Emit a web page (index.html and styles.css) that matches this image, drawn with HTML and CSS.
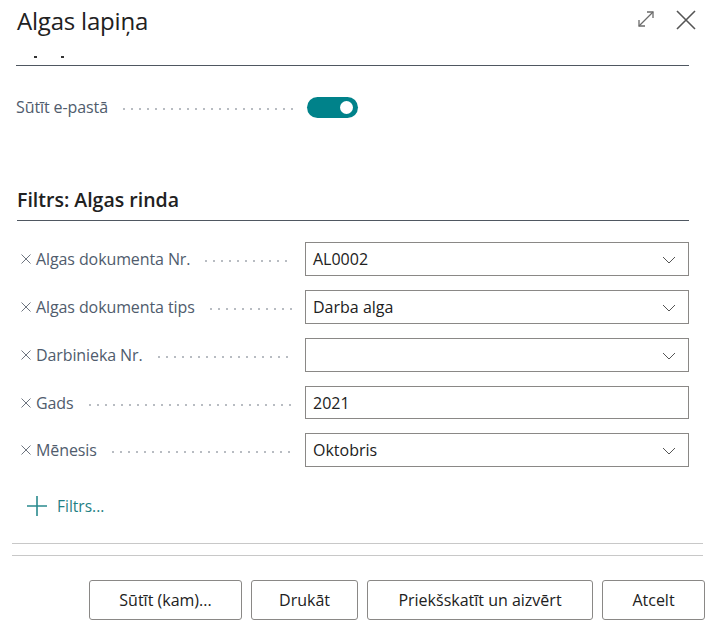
FILE: index.html
```html
<!DOCTYPE html>
<html lang="lv">
<head>
<meta charset="utf-8">
<link rel="stylesheet" href="styles.css">
</head>
<body>
<div class="dialog">
  <header class="head">
    <h1 class="title">Algas lapiņa</h1>
    <div class="head-icons">
      <svg class="ico-expand" width="20" height="20" viewBox="0 0 20 20" fill="none" stroke="#6b6b6b" stroke-width="1.3">
        <path d="M3 17 L17 3"/><path d="M3 11 V17 H9" stroke-linejoin="miter"/><path d="M11 3 H17 V9"/>
      </svg>
      <svg class="ico-close" width="22" height="22" viewBox="0 0 22 22" fill="none" stroke="#555" stroke-width="1.6">
        <path d="M2 2 L20 20 M20 2 L2 20"/>
      </svg>
    </div>
  </header>
  <div class="scroll">
    <div class="cut-section">
      <div class="cut-dots"><span></span><span></span></div>
    </div>
    <div class="field-row opt-row">
      <span class="label">Sūtīt e-pastā</span>
      <span class="leader short"></span>
      <span class="toggle"><span class="knob"></span></span>
    </div>

    <h2 class="section-title">Filtrs: Algas rinda</h2>
    <div class="filters">
      <div class="frow">
        <svg class="x" width="10" height="10" viewBox="0 0 10 10"><path d="M0.5 0.5 L9.5 9.5 M9.5 0.5 L0.5 9.5" stroke="#6e7580" stroke-width="1"/></svg><span class="label">Algas dokumenta Nr.</span><span class="leader"></span>
        <div class="input"><span>AL0002</span><svg class="chev" width="14" height="8" viewBox="0 0 14 8"><path d="M1 1 L7 7 L13 1" fill="none" stroke="#555" stroke-width="1"/></svg></div>
      </div>
      <div class="frow">
        <svg class="x" width="10" height="10" viewBox="0 0 10 10"><path d="M0.5 0.5 L9.5 9.5 M9.5 0.5 L0.5 9.5" stroke="#6e7580" stroke-width="1"/></svg><span class="label">Algas dokumenta tips</span><span class="leader"></span>
        <div class="input"><span>Darba alga</span><svg class="chev" width="14" height="8" viewBox="0 0 14 8"><path d="M1 1 L7 7 L13 1" fill="none" stroke="#555" stroke-width="1"/></svg></div>
      </div>
      <div class="frow">
        <svg class="x" width="10" height="10" viewBox="0 0 10 10"><path d="M0.5 0.5 L9.5 9.5 M9.5 0.5 L0.5 9.5" stroke="#6e7580" stroke-width="1"/></svg><span class="label">Darbinieka Nr.</span><span class="leader"></span>
        <div class="input"><span></span><svg class="chev" width="14" height="8" viewBox="0 0 14 8"><path d="M1 1 L7 7 L13 1" fill="none" stroke="#555" stroke-width="1"/></svg></div>
      </div>
      <div class="frow">
        <svg class="x" width="10" height="10" viewBox="0 0 10 10"><path d="M0.5 0.5 L9.5 9.5 M9.5 0.5 L0.5 9.5" stroke="#6e7580" stroke-width="1"/></svg><span class="label">Gads</span><span class="leader"></span>
        <div class="input"><span>2021</span></div>
      </div>
      <div class="frow">
        <svg class="x" width="10" height="10" viewBox="0 0 10 10"><path d="M0.5 0.5 L9.5 9.5 M9.5 0.5 L0.5 9.5" stroke="#6e7580" stroke-width="1"/></svg><span class="label">Mēnesis</span><span class="leader"></span>
        <div class="input"><span>Oktobris</span><svg class="chev" width="14" height="8" viewBox="0 0 14 8"><path d="M1 1 L7 7 L13 1" fill="none" stroke="#555" stroke-width="1"/></svg></div>
      </div>
    </div>
    <div class="add-filter">
      <svg width="20" height="20" viewBox="0 0 20 20" fill="none" stroke="#2a8a8e" stroke-width="1.6"><path d="M10 0 V20 M0 10 H20"/></svg>
      <span>Filtrs...</span>
    </div>
    <div class="end-line"></div>
  </div>
  <footer class="foot">
    <button class="btn btn1">Sūtīt (kam)...</button>
    <button class="btn btn2">Drukāt</button>
    <button class="btn btn3">Priekšskatīt un aizvērt</button>
    <button class="btn btn4">Atcelt</button>
  </footer>
</div>
</body>
</html>
```

FILE: styles.css
```css
* { box-sizing: border-box; }
html, body { margin: 0; padding: 0; background: #fff; }
body {
  font-family: "Open Sans", "Noto Sans", sans-serif;
  color: #212121;
  width: 715px;
  height: 628px;
  overflow: hidden;
}
.dialog { width: 715px; }
.head {
  display: flex;
  align-items: center;
  justify-content: space-between;
  height: 40px;
  padding: 0 18px 0 17px;
}
.title {
  margin: 0;
  font-size: 24px;
  font-weight: 400;
  color: #212121;
  letter-spacing: -0.2px;
}
.head-icons { display: flex; align-items: center; gap: 19px; }
.ico-expand { margin-top: -2px; }
.scroll { padding: 0 26px 0 16px; }
.cut-section {
  height: 26px;
  border-bottom: 1.5px solid #4f5761;
  position: relative;
}
.cut-dots { position: absolute; left: 18px; top: 16px; display: flex; gap: 24px; }
.cut-dots span { width: 3px; height: 1.5px; background: #333; display: block; }
.field-row { display: flex; align-items: center; }
.opt-row { margin-top: 30px; height: 22px; }
.label {
  font-size: 16px;
  color: #505c6d;
  white-space: nowrap;
  letter-spacing: -0.1px;
}
.leader {
  flex: 1;
  height: 2px;
  margin: 4px 12px 0 12px;
  background-image: radial-gradient(circle, #b8bcc2 0.8px, transparent 1px);
  background-size: 8px 2px;
  background-repeat: repeat-x;
}
.leader.short { flex: 0 0 176px; margin-right: 11px; }
.toggle {
  width: 51px;
  height: 21px;
  border-radius: 11px;
  background: #00828a;
  position: relative;
  display: inline-block;
}
.knob {
  position: absolute;
  right: 5px;
  top: 4px;
  width: 13px;
  height: 13px;
  border-radius: 50%;
  background: #fff;
}
.section-title {
  margin: 69px 0 0 1px;
  font-size: 19.5px;
  font-weight: 600;
  color: #212121;
  padding-bottom: 7px;
  border-bottom: 1.5px solid #4f5761;
  line-height: 26px;
}
.filters { margin-top: 21px; display: flex; flex-direction: column; gap: 14px; }
.frow { display: flex; align-items: center; height: 34px; }
.frow:nth-child(4) { height: 33px; }
.x {
  flex: 0 0 10px;
  margin: 0 5px 0 5px;
}
.input {
  flex: 0 0 384px;
  height: 100%;
  border: 1px solid #8a8886;
  display: flex;
  align-items: center;
  justify-content: space-between;
  padding: 0 12px 0 7px;
  font-size: 16px;
  color: #212121;
}
.chev { margin-top: 1px; }
.add-filter {
  display: flex;
  align-items: center;
  gap: 10px;
  margin: 28px 0 0 11px;
  color: #1f7f84;
  font-size: 15.5px;
}
.end-line {
  margin-top: 26px;
  height: 13px;
  border-top: 1px solid #c8c8c8;
  border-bottom: 1px solid #c8c8c8;
  margin-right: -14px;
  margin-left: -4px;
}
.foot {
  display: flex;
  justify-content: flex-end;
  gap: 9px;
  padding: 24px 10px 0 0;
}
.btn {
  font-family: inherit;
  height: 40px;
  background: #fff;
  border: 1px solid #8a8886;
  border-radius: 3px;
  font-size: 16px;
  color: #212121;
  padding: 0;
}
.btn1 { width: 153px; }
.btn2 { width: 107px; }
.btn3 { width: 226px; }
.btn4 { width: 103px; }
```
